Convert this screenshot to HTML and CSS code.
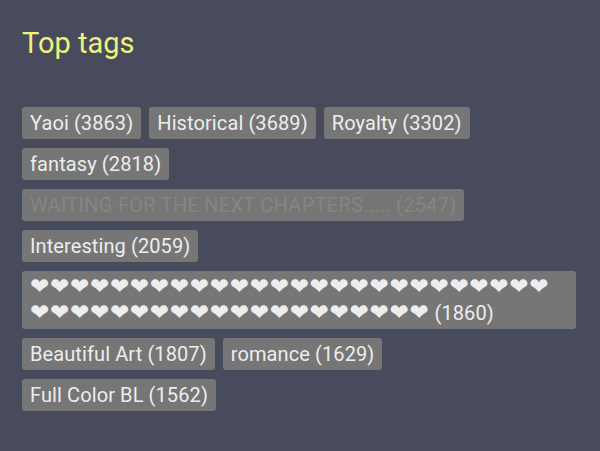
FILE: index.html
```html
<!DOCTYPE html>
<html>
<head>
<meta charset="utf-8">
<link rel="stylesheet" href="styles.css">
</head>
<body>
<div class="panel">
  <h2 class="title">Top tags</h2>
  <div class="tags">
    <span class="tag">Yaoi (3863)</span>
    <span class="tag">Historical (3689)</span>
    <span class="tag">Royalty (3302)</span>
    <span class="tag">fantasy (2818)</span>
    <span class="tag tag-faded">WAITING FOR THE NEXT CHAPTERS..... (2547)</span>
    <span class="tag">Interesting (2059)</span>
    <span class="tag"><span class="hearts">❤︎❤︎❤︎❤︎❤︎❤︎❤︎❤︎❤︎❤︎❤︎❤︎❤︎❤︎❤︎❤︎❤︎❤︎❤︎❤︎❤︎❤︎❤︎❤︎❤︎❤︎❤︎❤︎❤︎❤︎❤︎❤︎❤︎❤︎❤︎❤︎❤︎❤︎❤︎❤︎❤︎❤︎❤︎❤︎❤︎❤︎</span> (1860)</span>
    <span class="tag">Beautiful Art (1807)</span>
    <span class="tag">romance (1629)</span>
    <span class="tag">Full Color BL (1562)</span>
  </div>
</div>
</body>
</html>
```

FILE: styles.css
```css
html, body {
  margin: 0;
  padding: 0;
  background: #474b5c;
}
body {
  width: 600px;
  height: 451px;
  overflow: hidden;
  font-family: Roboto, "Liberation Sans", sans-serif;
}
.panel {
  padding: 23px 24px 0 22px;
}
.title {
  margin: 0 0 44px 0;
  font-size: 29px;
  font-weight: 400;
  line-height: 40px;
  color: #eef27a;
}
.tags {
  display: flex;
  flex-wrap: wrap;
  align-items: flex-start;
  gap: 9px 8px;
}
.tag {
  background: #767676;
  color: #ededed;
  font-size: 20px;
  line-height: 26px;
  letter-spacing: 0.1px;
  padding: 3px 8px;
  border-radius: 3px;
}
.tag-faded {
  color: #858585;
  letter-spacing: 0.27px;
}
.hearts {
  font-family: "DejaVu Sans", sans-serif;
  font-size: 23px;
  line-height: 20px;
  letter-spacing: 0.7px;
}
```
